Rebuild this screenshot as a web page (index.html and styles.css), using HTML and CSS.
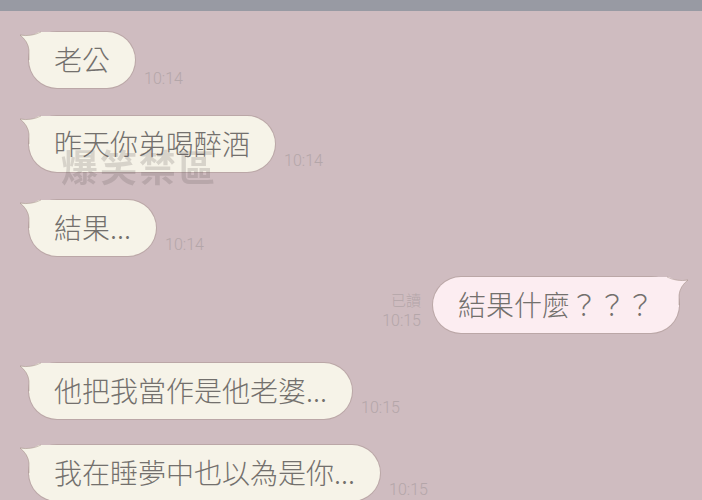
FILE: index.html
```html
<!DOCTYPE html>
<html lang="zh-Hant">
<head>
<meta charset="utf-8">
<title>Chat</title>
<link rel="stylesheet" href="styles.css">
</head>
<body>
<div class="screen">
  <div class="topbar"></div>
  <div class="chat">
    <div class="row in r1">
      <div class="bubble">
        <svg class="tail" viewBox="0 0 40 40" width="40" height="40"><path class="tail-fill" d="M1 5 Q12 7 20 2 L40 2 L40 32 L10 32 L10 20 Q9 11 1 5 Z"/><path class="tail-line" d="M10 30 L10 20 Q9 11 1 5 Q12 7 22 2"/></svg>
        <span class="msg">老公</span>
      </div>
      <div class="meta"><span class="time">10:14</span></div>
    </div>
    <div class="row in r2">
      <div class="bubble">
        <svg class="tail" viewBox="0 0 40 40" width="40" height="40"><path class="tail-fill" d="M1 5 Q12 7 20 2 L40 2 L40 32 L10 32 L10 20 Q9 11 1 5 Z"/><path class="tail-line" d="M10 30 L10 20 Q9 11 1 5 Q12 7 22 2"/></svg>
        <span class="msg">昨天你弟喝醉酒</span>
      </div>
      <div class="meta low"><span class="time">10:14</span></div>
    </div>
    <div class="row in r3">
      <div class="bubble">
        <svg class="tail" viewBox="0 0 40 40" width="40" height="40"><path class="tail-fill" d="M1 5 Q12 7 20 2 L40 2 L40 32 L10 32 L10 20 Q9 11 1 5 Z"/><path class="tail-line" d="M10 30 L10 20 Q9 11 1 5 Q12 7 22 2"/></svg>
        <span class="msg">結果...</span>
      </div>
      <div class="meta low"><span class="time">10:14</span></div>
    </div>
    <div class="row out r4">
      <div class="meta out-meta"><span class="read">已讀</span><span class="time">10:15</span></div>
      <div class="bubble">
        <svg class="tail" viewBox="0 0 40 40" width="40" height="40"><path class="tail-fill" d="M1 5 Q12 7 20 2 L40 2 L40 32 L10 32 L10 20 Q9 11 1 5 Z"/><path class="tail-line" d="M10 30 L10 20 Q9 11 1 5 Q12 7 22 2"/></svg>
        <span class="msg">結果什麼？？？</span>
      </div>
    </div>
    <div class="row in r5">
      <div class="bubble">
        <svg class="tail" viewBox="0 0 40 40" width="40" height="40"><path class="tail-fill" d="M1 5 Q12 7 20 2 L40 2 L40 32 L10 32 L10 20 Q9 11 1 5 Z"/><path class="tail-line" d="M10 30 L10 20 Q9 11 1 5 Q12 7 22 2"/></svg>
        <span class="msg">他把我當作是他老婆...</span>
      </div>
      <div class="meta low"><span class="time">10:15</span></div>
    </div>
    <div class="row in r6">
      <div class="bubble">
        <svg class="tail" viewBox="0 0 40 40" width="40" height="40"><path class="tail-fill" d="M1 5 Q12 7 20 2 L40 2 L40 32 L10 32 L10 20 Q9 11 1 5 Z"/><path class="tail-line" d="M10 30 L10 20 Q9 11 1 5 Q12 7 22 2"/></svg>
        <span class="msg">我在睡夢中也以為是你...</span>
      </div>
      <div class="meta low"><span class="time">10:15</span></div>
    </div>
    <div class="watermark">爆笑禁區</div>
  </div>
</div>
</body>
</html>
```

FILE: styles.css
```css
html, body {
  margin: 0;
  padding: 0;
}
body {
  background: #cfbcc0;
  font-family: "Noto Sans CJK TC", "Noto Sans", sans-serif;
}
.screen {
  width: 702px;
  height: 500px;
  overflow: hidden;
  background: #cfbcc0;
}
.topbar {
  height: 11px;
  background: #989aa3;
}
.chat {
  position: relative;
  display: flex;
  flex-direction: column;
  padding: 0 23px 0 29px;
}
.row {
  display: flex;
  align-items: flex-end;
  height: 56px;
}
.row.out {
  justify-content: flex-end;
}
.r1 { margin-top: 21px; }
.r2 { margin-top: 28px; }
.r3 { margin-top: 28px; }
.r4 { margin-top: 21px; }
.r5 { margin-top: 30px; }
.r6 { margin-top: 26px; }

.bubble {
  position: relative;
  z-index: 0;
  height: 56px;
  box-sizing: border-box;
  display: flex;
  align-items: center;
  padding: 0 25px;
  border-radius: 28px;
  background: #f6f3e8;
  box-shadow: 0 0 0 1px rgba(150, 130, 120, 0.35);
  color: #73706d;
  font-size: 28px;
  font-weight: 300;
  line-height: 1;
  white-space: nowrap;
}
.msg {
  position: relative;
  top: -1px;
}
.tail {
  position: absolute;
  z-index: -1;
  left: -10px;
  top: -2px;
  overflow: visible;
}
.tail-fill {
  fill: #f6f3e8;
}
.tail-line {
  fill: none;
  stroke: rgba(150, 130, 120, 0.45);
  stroke-width: 1;
}
.out .bubble {
  background: #fcedf1;
}
.out .tail {
  left: auto;
  right: -10px;
  transform: scaleX(-1);
}
.out .tail-fill {
  fill: #fcedf1;
}

.meta {
  display: flex;
  flex-direction: column;
  margin-left: 9px;
  padding-bottom: 0;
  color: #b4a6a9;
  font-family: Roboto, "Noto Sans CJK TC", sans-serif;
  font-size: 16px;
  font-weight: 300;
  line-height: 19px;
}
.meta.low {
  padding-bottom: 2px;
}
.out-meta {
  margin-left: 0;
  margin-right: 12px;
  align-items: flex-end;
  padding-bottom: 2px;
  line-height: 21px;
}
.read {
  font-family: "Noto Sans CJK TC", sans-serif;
  font-size: 15px;
  line-height: 20px;
}
.watermark {
  position: absolute;
  z-index: 2;
  left: 61px;
  top: 137px;
  font-size: 37px;
  font-weight: 700;
  line-height: 1;
  letter-spacing: 2px;
  color: rgba(95, 85, 85, 0.2);
  filter: blur(0.6px);
  pointer-events: none;
}
```
